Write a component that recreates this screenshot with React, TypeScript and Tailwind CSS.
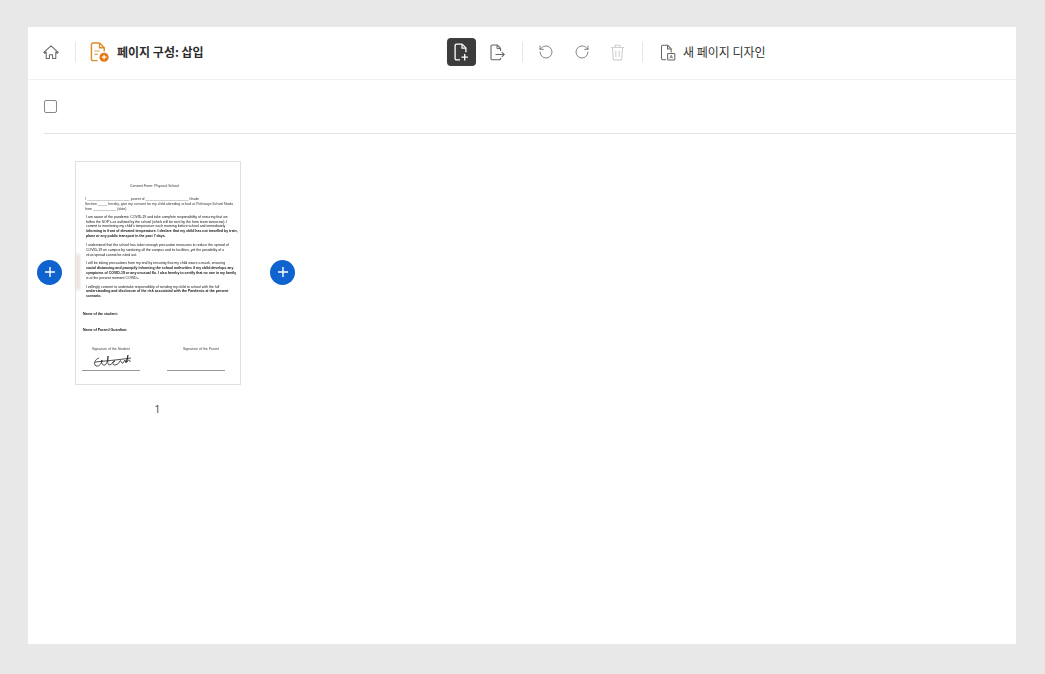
import { RotateCcw, RotateCw } from "lucide-react";

const kr = "font-['Noto_Sans_CJK_KR','Noto_Sans',sans-serif]";

function Divider({ className }: { className: string }) {
  return <span className={`h-5 w-px shrink-0 bg-[#e8e8e8] ${className}`} />;
}

function HomeIcon() {
  return (
    <svg width="16" height="15" viewBox="0 0 17 16" fill="none" stroke="#666" strokeWidth="1.100" strokeLinejoin="round" className="ml-[15px] shrink-0">
      <path d="M0.800 7.800 8.500 1l7.700 6.800-.9 1-1.700-1.400v7.100h-3.400v-4.200H6.800v4.200H3.400V7.400L1.700 8.800z" />
    </svg>
  );
}

function OrganizeIcon() {
  return (
    <svg width="19" height="20" viewBox="0 0 20 21" fill="none" className="shrink-0">
      <path d="M8 19.600H3.200A1.700 1.700 0 0 1 1.500 17.900V2.700A1.700 1.700 0 0 1 3.200 1H10l5 5v4" stroke="#d98e2b" strokeWidth="1.500" strokeLinejoin="round" />
      <path d="M10 1v5h5" stroke="#d98e2b" strokeWidth="1.400" strokeLinejoin="round" />
      <path d="M4.500 9.500h6M4.500 13h4" stroke="#e3a95c" strokeWidth="1.200" />
      <circle cx="14.800" cy="16" r="4.800" fill="#e5750f" />
      <path d="M14.800 13.500v5M12.300 16h5" stroke="#fff" strokeWidth="1.300" />
    </svg>
  );
}

function InsertIcon() {
  return (
    <svg width="15" height="18" viewBox="0 0 15 18" fill="none">
      <path d="M6 16.800H2.400a1.300 1.300 0 0 1-1.300-1.300V2.400a1.300 1.300 0 0 1 1.300-1.300h5.700l3.800 3.800v4.300" stroke="#fff" strokeWidth="1.300" strokeLinejoin="round" />
      <path d="M8 1.300v3.800h3.800" stroke="#fff" strokeWidth="1.200" />
      <path d="M10.700 11v6.500M7.500 14.200h6.400" stroke="#fff" strokeWidth="1.300" />
    </svg>
  );
}

function ExtractIcon() {
  return (
    <svg width="15" height="17" viewBox="0 0 15 17" fill="none">
      <path d="M10.600 14v.6a1.200 1.200 0 0 1-1.200 1.200H2.300A1.300 1.300 0 0 1 1 14.500V2.300A1.300 1.300 0 0 1 2.300 1h4.900l3.400 3.400V7" stroke="#666" strokeWidth="1.100" strokeLinejoin="round" />
      <path d="M7 1.200v3.400h3.400" stroke="#666" strokeWidth="1" />
      <path d="M5.500 10.500h8.800M11.800 8.200l2.500 2.300-2.500 2.300" stroke="#666" strokeWidth="1.100" />
    </svg>
  );
}

function TrashIcon() {
  return (
    <svg width="15" height="17" viewBox="0 0 16 18" fill="none" stroke="#d0d0d0" strokeWidth="1.200">
      <path d="M1 3.600h14M5.400 3.400V1.200h5.200v2.200M2.600 3.800l.9 12a1 1 0 0 0 1 1h7a1 1 0 0 0 1-1l.9-12M6.200 7v6.800M9.800 7v6.800" />
    </svg>
  );
}

function DesignIcon() {
  return (
    <svg width="16" height="17" viewBox="0 0 16 18" fill="none" stroke="#666" strokeWidth="1.100">
      <path d="M6 16.600H2.400A1.300 1.300 0 0 1 1.100 15.300V2.600a1.300 1.300 0 0 1 1.300-1.300h5.200l3.800 3.800v4" strokeLinejoin="round" />
      <path d="M7.500 1.500v3.700h3.800" />
      <rect x="7.600" y="10" width="7.600" height="7" rx="0.800" />
      <path d="M10 15.200l1.400-3.400 1.400 3.400M10.500 14h1.800" strokeWidth="0.800" />
    </svg>
  );
}

function AddButton({ className }: { className: string }) {
  return (
    <button className={`mb-[2px] flex h-[25px] w-[25px] shrink-0 items-center justify-center rounded-full bg-[#0e63cf] ${className}`}>
      <svg width="10" height="10" viewBox="0 0 10 10" stroke="#fff" strokeWidth="1.400">
        <path d="M5 0v10M0 5h10" />
      </svg>
    </button>
  );
}

function DocPage() {
  return (
    <div className="relative flex h-[224px] w-[166px] shrink-0 flex-col border border-[#e0e0e0] bg-white pt-[22px] pl-[9px] font-['Liberation_Sans',sans-serif] text-[3.500px] leading-[4.900px] whitespace-nowrap text-[#111] blur-[0.3px]">
      <span className="absolute top-[92px] left-0 h-[36px] w-[4px] bg-[#eadfdb] blur-[1.500px]" />
      <p className="pr-[16px] text-center text-[#333]">Consent Form: Physical School</p>
      <div className="mt-[8px] text-[#333]">
        <p>I ______________________ parent of ______________________ Grade</p>
        <p>Section _____ hereby, give my consent for my child attending school at Pathways School Noida</p>
        <p>from ____________ (date)</p>
      </div>
      <div className="mt-[3px] pl-[1px]">
        <p>I am aware of the pandemic COVID-19 and take complete responsibility of ensuring that we</p>
        <p>follow the SOP's as outlined by the school (which will be sent by the form team tomorrow). I</p>
        <p>commit to monitoring my child's temperature each morning before school and immediately</p>
        <p className="font-bold">informing in front of elevated temperature. I declare that my child has not travelled by train,</p>
        <p className="font-bold">plane or any public transport in the past 7 days.</p>
      </div>
      <div className="mt-[4px] pl-[1px]">
        <p>I understand that the school has taken enough precaution measures to reduce the spread of</p>
        <p>COVID-19 on campus by sanitizing all the campus and its facilities, yet the possibility of a</p>
        <p>virus spread cannot be ruled out.</p>
      </div>
      <div className="mt-[3px] pl-[1px]">
        <p>I will be taking precautions from my end by ensuring that my child wears a mask, ensuring</p>
        <p className="font-bold">social distancing and promptly informing the school authorities if my child develops any</p>
        <p className="font-bold">symptoms of COVID-19 or any unusual flu. I also hereby to certify that no one in my family</p>
        <p>is at the present moment COVID+.</p>
      </div>
      <div className="mt-[4px] pl-[1px]">
        <p>I willingly consent to undertake responsibility of sending my child to school with the full</p>
        <p className="font-bold">understanding and disclosure of the risk associated with the Pandemic at the present</p>
        <p className="font-bold">scenario.</p>
      </div>
      <p className="mt-[13px] -ml-[2px] font-bold">Name of the student:</p>
      <p className="mt-[11px] -ml-[2px] font-bold">Name of Parent/ Guardian:</p>
      <div className="mt-[14px] flex justify-between pr-[21px] pl-[7px] text-[#444]">
        <span>Signature of the Student</span>
        <span>Signature of the Parent</span>
      </div>
      <div className="-ml-[3px] flex justify-between pr-[15px]">
        <div className="w-[58px] border-b border-[#999]">
          <svg width="42" height="18" viewBox="0 0 42 16" fill="none" stroke="#222" strokeWidth="0.800" className="ml-[11px]">
            <path d="M6 5C2 6 0 11 3 13c3 1 6-3 6-6-1 2 0 6 3 5 2-1 3-6 3-9 0 3-1 8 1 9 3 0 4-4 6-4-2 0-3 3-1 4 2 0 5-1 6-4 1-2 1 3 3 2l2-3 1 3 2-8-1 7c1-2 3-3 3 0" />
            <path d="M2 9c10-1 22-2 36-4" />
          </svg>
        </div>
        <div className="mt-[17px] w-[58px] border-b border-[#999]" />
      </div>
    </div>
  );
}

export default function App() {
  return (
    <div className={`h-[674px] w-[1045px] overflow-hidden bg-[#e8e8e8] pt-[27px] pr-[29px] pl-[28px] ${kr}`}>
      <div className="h-[617px] bg-white">
        <header className="flex h-[53px] items-center border-b border-[#f0f0f0] pb-[2px]">
          <HomeIcon />
          <Divider className="ml-[16px]" />
          <span className="ml-[14px]">
            <OrganizeIcon />
          </span>
          <h1 className="ml-[8px] w-[87px] text-[12px] font-bold whitespace-nowrap text-[#2c2c2c]">페이지 구성: 삽입</h1>
          <button className="ml-[243px] flex h-[28px] w-[29px] items-center justify-center rounded-[4px] bg-[#3c3c3c]">
            <InsertIcon />
          </button>
          <span className="ml-[14px]">
            <ExtractIcon />
          </span>
          <Divider className="ml-[17px]" />
          <RotateCcw size={16} strokeWidth={1.200} color="#666" className="ml-[15px]" />
          <RotateCw size={16} strokeWidth={1.200} color="#666" className="ml-[20px]" />
          <span className="ml-[20px]">
            <TrashIcon />
          </span>
          <Divider className="ml-[17px]" />
          <span className="ml-[17px]">
            <DesignIcon />
          </span>
          <span className="ml-[7px] text-[12px] whitespace-nowrap text-[#333]">새 페이지 디자인</span>
        </header>

        <div className="ml-[16px] flex h-[54px] items-center border-b border-[#e2e2e2] pb-[1px]">
          <span className="h-[13px] w-[13px] rounded-[2px] border-[1.500px] border-[#888]" />
        </div>

        <div className="flex items-center pt-[27px] pl-[9px]">
          <AddButton className="mr-[13px]" />
          <DocPage />
          <AddButton className="ml-[29px]" />
        </div>
        <p className="mt-[16px] w-[259px] text-center font-['Noto_Sans',sans-serif] text-[11px] text-[#555]">1</p>
      </div>
    </div>
  );
}
